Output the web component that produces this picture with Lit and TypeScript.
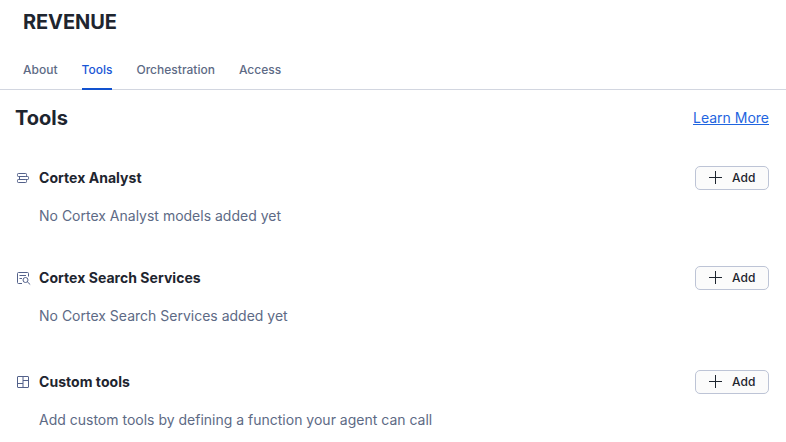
import { LitElement, html, svg, css } from "lit";
import { customElement } from "lit/decorators.js";

const analyst = svg`<path d="M3.3 3.5H10.7Q11.5 3.5 11.5 4.3V5.7Q11.5 6.5 10.7 6.5H3.3Q2.5 6.5 2.5 5.7V4.3Q2.5 3.5 3.3 3.5ZM3.3 9.5H10.7Q11.5 9.5 11.5 10.3V11.7Q11.5 12.5 10.7 12.5H3.3Q2.5 12.5 2.5 11.7V10.3Q2.5 9.5 3.3 9.5ZM4.5 6.5V9.5M10.7 6.5H12.7Q13.5 6.5 13.5 7.3V8.7Q13.5 9.5 12.7 9.5H10.7"/>`;
const search = svg`<path d="M7 13.5H3.5Q2.5 13.5 2.5 12.5V3.5Q2.5 2.5 3.5 2.5H12.5Q13.5 2.5 13.5 3.5V6.5M4.5 5.5H11M4.5 8.5H7"/><circle cx="10.5" cy="10" r="2.5"/><path d="M12.3 11.8L15.2 14.5"/>`;
const custom = svg`<rect x="2.5" y="2.5" width="11" height="11" rx=".5"/><path d="M8 2.5V13.5M2.5 9.5H8M8 6.5H13.5"/>`;

const tools = [
  { name: "Cortex Analyst", note: "No Cortex Analyst models added yet", icon: analyst },
  { name: "Cortex Search Services", note: "No Cortex Search Services added yet", icon: search },
  { name: "Custom tools", note: "Add custom tools by defining a function your agent can call", icon: custom },
];

@customElement("app-root")
export class AppRoot extends LitElement {
  static styles = css`
    :host { display: block; height: 442px; overflow: hidden; background: #fff; color: #1e252f; font-family: Inter, sans-serif; }
    * { box-sizing: border-box; }
    h1, h2, h3, p { margin: 0; }
    h1 { padding: 8px 23px 0; height: 50px; font-size: 20px; line-height: 28px; font-weight: 700; letter-spacing: -0.08px; }
    nav { display: flex; gap: 24px; height: 40px; padding: 0 23px; border-bottom: 1px solid #d2d6e0; }
    .tab { height: 40px; font-size: 12px; line-height: 40px; font-weight: 500; color: #5d6a85; letter-spacing: 0.01px; }
    .tab.active { color: #1a56d6; border-bottom: 2px solid #1252cf; }
    .heading { display: flex; justify-content: space-between; align-items: center; height: 56px; padding: 0 17px 0 15px; }
    h2 { font-size: 20px; line-height: 28px; font-weight: 700; }
    a { font-size: 14px; line-height: 20px; color: #1f65e0; text-decoration: underline; }
    .tool { height: 100px; padding: 20px 17px 0 15px; }
    .tool:last-child { margin-top: 4px; }
    .row { display: flex; align-items: center; height: 24px; }
    .icon { width: 16px; height: 16px; margin-right: 8px; fill: none; stroke: #53618a; stroke-width: 1; overflow: visible; }
    h3 { flex: 1; font-size: 14px; line-height: 20px; font-weight: 700; letter-spacing: 0.04px; }
    button { display: flex; align-items: center; width: 74px; height: 24px; padding: 0 0 0 12px; border: 1px solid #bdc4d6; border-radius: 5px; background: #fbfbfb; color: #1e252f; font: 500 12px/16px Inter, sans-serif; letter-spacing: 0.1px; }
    .plus { width: 15px; height: 16px; margin-right: 9px; fill: none; stroke: #1e252f; }
    p { padding: 16px 0 0 24px; font-size: 14px; line-height: 20px; color: #5d6a85; }
  `;

  render() {
    return html`
      <h1>REVENUE</h1>
      <nav>
        ${["About", "Tools", "Orchestration", "Access"].map(
          (t) => html`<div class="tab ${t === "Tools" ? "active" : ""}">${t}</div>`
        )}
      </nav>
      <div class="heading"><h2>Tools</h2><a href="#">Learn More</a></div>
      <main>
        ${tools.map(
          (t) => html`<section class="tool">
            <div class="row">
              <svg class="icon" viewBox="0 0 16 16">${t.icon}</svg>
              <h3>${t.name}</h3>
              <button><svg class="plus" viewBox="0 0 15 16"><path d="M1 7.5H14M7.5 1V14"/></svg>Add</button>
            </div>
            <p>${t.note}</p>
          </section>`
        )}
      </main>
    `;
  }
}
